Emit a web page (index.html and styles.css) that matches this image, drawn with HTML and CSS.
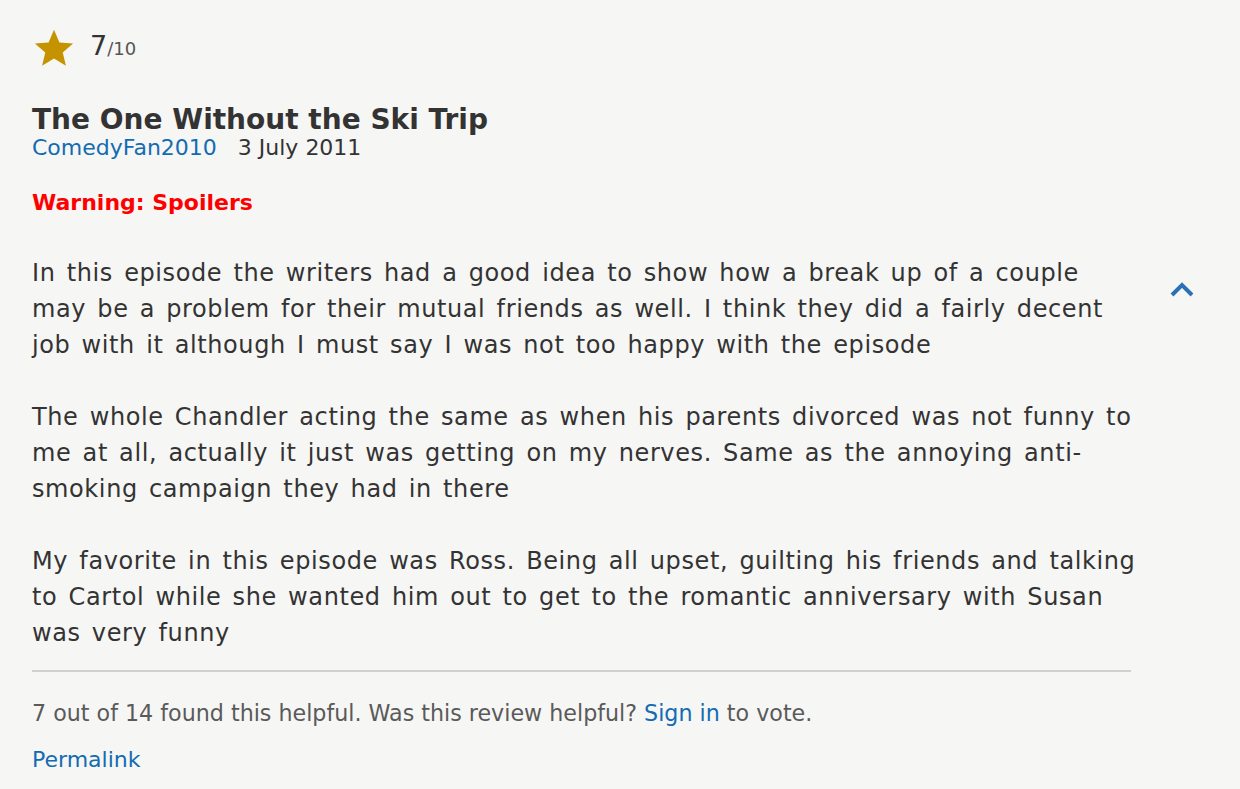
FILE: index.html
```html
<!DOCTYPE html>
<html lang="en">
<head>
<meta charset="utf-8">
<title>Review</title>
<link rel="stylesheet" href="styles.css">
</head>
<body>
<div class="review">
  <div class="main">
    <div class="rating">
      <svg class="star" viewBox="0 0 24 24" width="42" height="42"><path d="M12 1.6l3.1 7.2 7.8.6-5.9 5.1 1.8 7.6L12 18l-6.8 4.1 1.8-7.6-5.9-5.1 7.8-.6z" fill="#c59300"/></svg>
      <span class="score">7</span><span class="outof">/10</span>
    </div>
    <h2 class="title">The One Without the Ski Trip</h2>
    <div class="meta"><a class="user" href="#">ComedyFan2010</a><span class="date">3 July 2011</span></div>
    <div class="warning">Warning: Spoilers</div>
    <div class="text">
      <p>In this episode the writers had a good idea to show how a break up of a couple may be a problem for their mutual friends as well. I think they did a fairly decent job with it although I must say I was not too happy with the episode</p>
      <p>The whole Chandler acting the same as when his parents divorced was not funny to me at all, actually it just was getting on my nerves. Same as the annoying anti-smoking campaign they had in there</p>
      <p>My favorite in this episode was Ross. Being all upset, guilting his friends and talking to Cartol while she wanted him out to get to the romantic anniversary with Susan was very funny</p>
    </div>
    <div class="actions">7 out of 14 found this helpful. Was this review helpful? <a href="#">Sign in</a> to vote.</div>
    <div class="permalink"><a href="#">Permalink</a></div>
  </div>
  <div class="side">
    <svg class="chev" viewBox="0 0 24 18" width="24" height="18"><path d="M2 15L12 5l10 10" fill="none" stroke="#2a72b5" stroke-width="4"/></svg>
  </div>
</div>
</body>
</html>
```
FILE: styles.css
```css
html, body {
  margin: 0;
  padding: 0;
  background: #f6f6f5;
}
body {
  font-family: "DejaVu Sans", Verdana, sans-serif;
  color: #333333;
}
a {
  color: #136cb2;
  text-decoration: none;
}
.review {
  display: flex;
  padding: 26px 0 0 32px;
}
.main {
  width: 1099px;
}
.side {
  padding: 254px 0 0 39px;
}
.chev {
  display: block;
}
.rating {
  display: flex;
  align-items: center;
  height: 44px;
}
.star {
  margin-left: 1px;
  margin-right: 15px;
}
.score {
  font-size: 27px;
  color: #333;
  position: relative;
  top: -3px;
}
.outof {
  font-size: 18px;
  color: #555;
  position: relative;
  top: 0px;
}
.title {
  margin: 35px 0 0 0;
  font-size: 28px;
  font-weight: bold;
  line-height: 30px;
  color: #333;
}
.meta {
  font-size: 22px;
  line-height: 26px;
}
.date {
  margin-left: 21px;
}
.warning {
  margin-top: 29px;
  font-size: 22px;
  line-height: 26px;
  font-weight: bold;
  color: #ff0000;
}
.text {
  margin-top: 39px;
  margin-right: -8px;
  font-size: 24px;
  letter-spacing: 0.6px;
  word-spacing: 3px;
  line-height: 36px;
}
.text p {
  margin: 0 0 36px 0;
}
.text p:last-child {
  margin-bottom: 0;
}
.actions {
  margin-top: 19px;
  border-top: 2px solid #d0d0d0;
  padding-top: 28px;
  font-size: 22.2px;
  line-height: 26px;
  color: #5a5a5a;
}
.permalink {
  margin-top: 21px;
  font-size: 22px;
  line-height: 26px;
}
```
